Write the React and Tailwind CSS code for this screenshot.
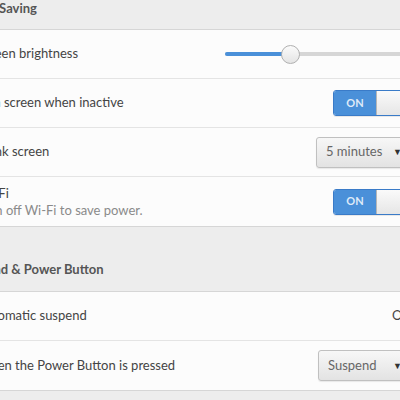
import React from "react";

const Switch = () => (
  <div className="flex h-[26px] w-[80px] overflow-hidden rounded-[3px] border border-[#3a7bc8] shadow-[0_1px_0_rgba(0,0,0,0.08)]">
    <div className="flex w-[42px] items-center justify-center bg-[#4a90d9] text-[11px] font-bold text-[#dfeaf8]">
      ON
    </div>
    <div className="flex-1 border-l border-[#b6b6b6] bg-gradient-to-b from-[#fafafa] to-[#e6e6e6]" />
  </div>
);

const Dropdown = ({ label, width }) => (
  <div
    className={`flex h-[31px] items-center justify-between rounded-[3px] border border-[#c0c0c0] bg-gradient-to-b from-[#f7f7f7] to-[#e3e3e3] pl-[9px] pr-[10px] text-[13px] text-[#666] shadow-[0_1px_1px_rgba(0,0,0,0.08)] ${width}`}
  >
    <span>{label}</span>
    <span className="text-[9px] text-[#333]">▼</span>
  </div>
);

const Row = ({ children, right, last }) => (
  <div className={`flex h-[49px] items-center justify-between pl-[17px] pr-[10px] ${last ? "" : "border-b border-[#e4e4e4]"}`}>
    <div className="flex flex-col">{children}</div>
    {right}
  </div>
);

export default function App() {
  return (
    <div
      className="h-[400px] w-[400px] overflow-hidden bg-[#ededed] text-[#444]"
      style={{ fontFamily: 'Lato, "Noto Sans", sans-serif' }}
    >
      <div className="-ml-[41px] w-[465px]">
        <div className="h-[16px] text-[13px] font-bold leading-[16px] text-[#555]">Power Saving</div>
        <div className="mt-[13px] border border-[#d6d6d6] bg-[#fcfcfc]">
          <Row
            right={
              <div className="relative mr-[-10px] flex h-[20px] w-[198px] items-center">
                <div className="h-[4px] w-full rounded-full bg-[#d6d6d6]" />
                <div className="absolute left-0 h-[4px] w-[66px] rounded-full bg-[#4a90d9]" />
                <div className="absolute left-[56px] h-[19px] w-[19px] rounded-full border border-[#b0b0b0] bg-gradient-to-b from-[#fbfbfb] to-[#e4e4e4]" />
              </div>
            }
          >
            <span className="text-[13px]">Screen brightness</span>
          </Row>
          <Row right={<Switch />}>
            <span className="text-[13px]">Dim screen when inactive</span>
          </Row>
          <Row right={<Dropdown label="5 minutes" width="w-[97px]" />}>
            <span className="text-[13px]">Blank screen</span>
          </Row>
          <Row right={<Switch />} last>
            <span className="text-[13px] leading-[17px]">Wi-Fi</span>
            <span className="text-[13px] leading-[17px] text-[#8a8a8a]">Turn off Wi-Fi to save power.</span>
          </Row>
        </div>
        <div className="mt-[34px] h-[16px] text-[13px] font-bold leading-[16px] text-[#555]">Suspend &amp; Power Button</div>
        <div className="mt-[14px] border border-[#d6d6d6] bg-[#fcfcfc]">
          <Row right={<span className="mr-[2px] text-[13px]">Off</span>}>
            <span className="text-[13px]">Automatic suspend</span>
          </Row>
          <Row right={<Dropdown label="Suspend" width="w-[95px]" />} last>
            <span className="text-[13px]">When the Power Button is pressed</span>
          </Row>
        </div>
      </div>
    </div>
  );
}
